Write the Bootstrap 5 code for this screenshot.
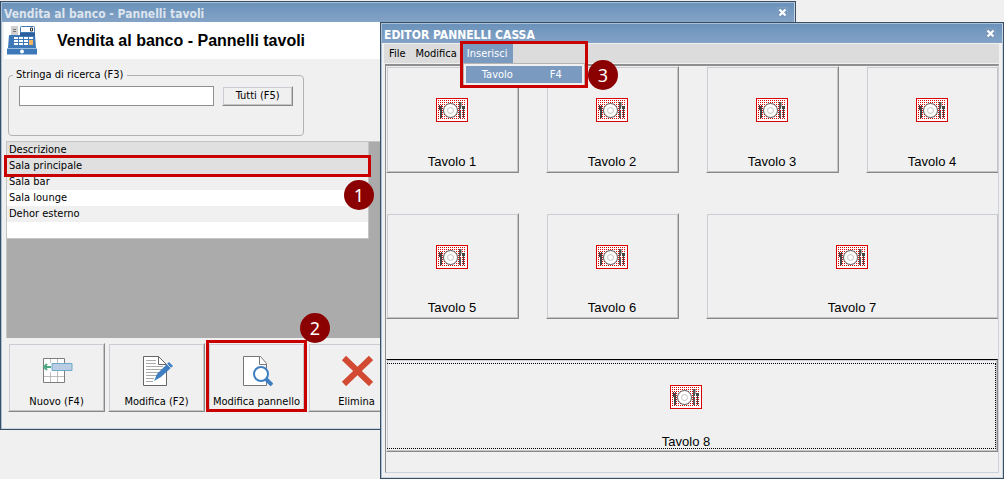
<!DOCTYPE html>
<html lang="it">
<head>
<meta charset="utf-8">
<meta name="viewport" content="width=device-width, initial-scale=1">
<title>Vendita al banco - Pannelli tavoli</title>
<link href="https://cdn.jsdelivr.net/npm/bootstrap@5.3.0/dist/css/bootstrap.min.css" rel="stylesheet">
<style>
  body { background: #f0f0f0; color: #000; font: 11px/16px "DejaVu Sans Condensed", Tahoma, sans-serif; overflow: hidden; }
  .desktop { min-height: 100vh; }
  .win { background: #f0f0f0; border: 1px solid #3a4e63; box-shadow: inset 1px 1px #a9c0d6, inset -1px -1px #c9d6e2; padding: 2px 4px 3px 3px; }
  .win-main { left: 0; top: 1px; width: 796px; height: 429px; }
  .win-editor { left: 380px; right: 0; top: 22px; height: 457px; }
  .win-title { height: 19px; margin: -1px -3px 0 -2px; padding: 3px 6px 0 2px; background: linear-gradient(#6b92bb, #83a3c6); font: bold 12px/16px "DejaVu Sans Condensed", Tahoma, sans-serif; color: #fff; }
  .win-main .win-title { color: #dde5ee; }
  .win-close { width: 11px; height: 11px; margin-bottom: 4px; padding: 0; border: 1px solid #7f9fc2; background: #7596bb; line-height: 0; display: block; }
  .win-head { background: #fff; height: 37px; margin-right: -3px; gap: 19px; }
  .win-head h1 { font: bold 16px/20px "Liberation Sans", Arial, sans-serif; }
  .search-box { width: 296px; height: 69px; border: 1px solid #b2b2b2; border-radius: 4px; margin: 8px 0 0 4px; padding: 3px 10px 0; }
  .search-box legend { float: none; width: auto; font-size: 11px; line-height: 16px; margin: 0 0 0 -6px; padding: 0 4px 0 3px; height: 16px; }
  .search-box input { width: 196px; height: 20px; border: 1px solid #8f8f8f; background: #fff; padding: 0 4px; }
  .raised { background: #f0f0f0; color: #000; border: 1px solid; border-color: transparent #888 #888 transparent; box-shadow: inset 1px 1px #cccdd4, inset -1px -1px #c4c4c4; padding: 0; border-radius: 0; }
  .btn-all { width: 71px; height: 20px; }
  .list-area { background: #ababab; border: solid #c4c4c4; border-width: 1px 0 0 1px; height: 197px; margin: 5px 0 0 2px; }
  .list-area table { width: 362px; border-right: 1px solid #c4c4c4; border-bottom: 1px solid #c4c4c4; }
  .list-area th, .list-area td { height: 16px; line-height: 16px; padding: 0 2px; font-weight: normal; position: relative; }
  .list-area thead, .row-on { background: #e0e0e0; }
  .row-odd { background: #f0f0f0; }
  .row-even { background: #fff; }
  .toolbox { gap: 3px; margin: 5px 0 0 4px; }
  .tool { width: 97px; height: 69px; padding: 8px 0 0; }
  .tool svg { display: block; margin: 0 auto 8px; }
  .frame { border: 3px solid #c80000; pointer-events: none; }
  .frame-row { inset: -3px -3px -3px -3px; }
  .frame-tool { inset: -4px -3px -1px -3px; }
  .frame-menu { inset: -3px; }
  .step { width: 30px; height: 30px; border-radius: 50%; background: #8b0000; color: #fff; font: 18px/30px "Noto Sans", sans-serif; text-align: center; z-index: 5; }
  .step-1 { right: -6px; top: 22px; }
  .step-2 { right: -26px; top: -31px; }
  .step-3 { left: 125px; top: 16px; }
  .menubar { background: #dcdcdc; height: 19px; margin-top: 1px; padding-left: 1px; }
  .menubar a.menu-top { color: #000; text-decoration: none; line-height: 19px; padding: 0 6px 0 4px; display: block; }
  .menubar a.menu-on { background: #7a9abf; color: #fff; }
  .menu-wrap { z-index: 4; }
  .menu-drop { left: 0; top: 19px; width: 122px; min-width: 0; padding: 2px; margin: 0; border: 1px solid #b4b4b4; border-radius: 0; background: #f0f0f0; box-shadow: none; font-size: 11px; display: block; }
  .menu-drop a { background: #7a9abf; color: #fff; line-height: 17px; padding: 0 20px 0 16px; }
  .menu-area { left: 0; top: 0; width: 122px; height: 41px; z-index: 1001; }
  .canvas-area { height: 409px; margin: 1px 0 0 1px; border: solid; border-width: 2px 1px 1px 1px; border-color: #8e8e8e #cdd1d8 #cdd1d8 #8e8e8e; overflow: hidden; }
  .tiles { display: grid; grid-template-columns: repeat(4, 1fr); grid-template-rows: 107px 106px 93px; gap: 40px 27px; margin-right: -1px; }
  .tile { display: flex; flex-direction: column; align-items: center; justify-content: space-between; padding: 31px 1px 2px 0; font: 13px/16px "Liberation Sans", Arial, sans-serif; }
  .tile-wide { grid-column: span 2; }
  .tile-full { grid-column: span 4; position: relative; padding: 25px 12px 1px 0; border-top: 1px solid #000; margin-right: 1px; }
  .tile-full::after { content: ""; position: absolute; inset: 3px 1px 2px 0; border: 1px dotted #000; border-left: 0; }
</style>
</head>
<body>
<svg width="0" height="0" class="position-absolute" aria-hidden="true">
  <defs>
    <symbol id="placemat" viewBox="0 0 32 24">
      <rect width="32" height="24" fill="#dc0000"/><rect x="1" y="1" width="30" height="22" fill="#fff"/>
      <path d="M2 2.500h28M2 4.500h28M2 6.500h28M2 8.500h28M2 10.500h28M2 12.500h28M2 14.500h28M2 16.500h28M2 18.500h28M2 20.500h28" fill="none" stroke="#d80000" stroke-dasharray="1 1"/>
      <circle cx="14.500" cy="12.500" r="7" fill="#fff" stroke="#555"/><circle cx="14.500" cy="12.500" r="3" fill="#fff" stroke="#c4c4c4"/>
      <path d="M3 7h1v3h1V7h1v5H5v8H4v-8H3z" fill="#444"/><path d="M3 9h3v2H3zM4 12h2v8H4z" fill="#444"/>
      <path d="M23 4h2v7h-1v2h1v7h-2z" fill="#555"/><path d="M25 4h1v5h-1z" fill="#aaa"/>
      <path d="M26 8h3v3h-1v9h-1v-9h-1z" fill="#444"/>
    </symbol>
    <symbol id="cross" viewBox="0 0 9 9"><path d="M1.500 1.500l6 6M7.500 1.500l-6 6" stroke="#fff" stroke-width="2.200"/></symbol>
  </defs>
</svg>

<main class="desktop position-relative overflow-hidden">
  <section class="win win-main position-absolute">
    <div class="win-title d-flex justify-content-between align-items-center">
      <span>Vendita al banco - Pannelli tavoli</span>
      <button class="win-close" aria-label="Chiudi"><svg width="9" height="9"><use href="#cross"/></svg></button>
    </div>
    <header class="win-head d-flex align-items-center">
      <svg width="34" height="34" viewBox="0 0 34 34">
        <path d="M5 11h26l1 13H4z" fill="#3d78b8"/>
        <path d="M16 8h15v4H16z" fill="#2c5f9b"/>
        <rect x="16.500" y="2.500" width="14" height="6" rx="1" fill="#fff" stroke="#3d78b8"/><path d="M26.500 4h2v3h-2z" fill="none" stroke="#333"/>
        <path d="M7 2h7v9H7z" fill="#d0d0d0"/><path d="M9 5.500h3M9 7.500h3" stroke="#777"/>
        <path d="M10 13h19v8H10z" fill="#fff"/><path d="M10 15.500h19M10 18.500h19M14.500 13v8M19.500 13v8M24.500 13v8" stroke="#3d78b8"/>
        <path d="M25 16h4v5h-4z" fill="#f4b562"/>
        <path d="M3 24.500h30v6H3z" fill="#3d78b8"/><circle cx="18" cy="27.500" r="2" fill="#fff"/>
      </svg>
      <h1 class="m-0">Vendita al banco - Pannelli tavoli</h1>
    </header>

    <fieldset class="search-box">
      <legend><label for="search">Stringa di ricerca (F3)</label></legend>
      <div class="d-flex gap-2">
        <input id="search" type="text">
        <button class="raised btn-all">Tutti (F5)</button>
      </div>
    </fieldset>

    <div class="list-area">
      <table>
        <thead><tr><th scope="col">Descrizione</th></tr></thead>
        <tbody>
          <tr class="row-on"><td>Sala principale<span class="frame frame-row position-absolute"></span><span class="step step-1 position-absolute">1</span></td></tr>
          <tr class="row-odd"><td>Sala bar</td></tr>
          <tr class="row-even"><td>Sala lounge</td></tr>
          <tr class="row-odd"><td>Dehor esterno</td></tr>
          <tr class="row-even"><td></td></tr>
        </tbody>
      </table>
    </div>

    <div class="toolbox d-flex">
      <button class="raised tool">
        <svg width="32" height="32" viewBox="0 0 32 32"><path d="M2.500 4.500h21v24h-21z" fill="#fff" stroke="#7d7d7d"/><path d="M9.500 5v23M16.500 5v23M3 10.500h20M3 16.500h20M3 22.500h20" stroke="#bcbcbc"/><path d="M3 9h8v9H3z" fill="#fff"/><path d="M11 9.500h20v7H11z" fill="#b9cde5" stroke="#6fabc9"/><path d="M10 13H3M6 10l-3 3 3 3" fill="none" stroke="#4fa883" stroke-width="2"/></svg>
        Nuovo (F4)
      </button>
      <button class="raised tool">
        <svg width="32" height="32" viewBox="0 0 32 32"><path d="M2.500 2.500h15l8 8v21h-23z" fill="#fff" stroke="#666"/><path d="M17.500 2.500v8h8" fill="none" stroke="#666"/><path d="M5 6.500h10M5 9.500h10M5 12.500h17M5 15.500h17M5 18.500h15M5 21.500h12M5 24.500h8M5 27.500h7" stroke="#aaa"/><path d="M13 27l3-7L28 8l4 4-12 11z" fill="#3f7fc1"/><path d="M26 10l4 4" stroke="#fff" stroke-width=".8"/></svg>
        Modifica (F2)
      </button>
      <button class="raised tool position-relative">
        <svg width="32" height="32" viewBox="0 0 32 32"><path d="M2.500 2.500h17l6 7v22h-23z" fill="#fff" stroke="#777"/><path d="M18.500 2.500v8h7" fill="none" stroke="#777"/><circle cx="20" cy="20" r="7" fill="#fff" stroke="#3f7fc1" stroke-width="2"/><path d="M25 25l6 6" stroke="#3f7fc1" stroke-width="4"/></svg>
        Modifica pannello
        <span class="frame frame-tool position-absolute"></span><span class="step step-2 position-absolute">2</span>
      </button>
      <button class="raised tool">
        <svg width="32" height="32" viewBox="0 0 32 32"><path d="M3 4l27 26M30 4L3 30" stroke="#d14a31" stroke-width="6"/></svg>
        Elimina
      </button>
    </div>
  </section>

  <section class="win win-editor position-absolute">
    <div class="win-title d-flex justify-content-between align-items-center">
      <span>EDITOR PANNELLI CASSA</span>
      <button class="win-close" aria-label="Chiudi"><svg width="9" height="9"><use href="#cross"/></svg></button>
    </div>
    <nav class="menubar d-flex">
      <a class="menu-top" href="#">File</a>
      <a class="menu-top" href="#">Modifica</a>
      <div class="menu-wrap position-relative">
        <a class="menu-top menu-on" href="#">Inserisci</a>
        <div class="menu-drop dropdown-menu show">
          <a class="dropdown-item d-flex justify-content-between" href="#"><span>Tavolo</span><span>F4</span></a>
        </div>
        <div class="menu-area position-absolute pe-none"><span class="frame frame-menu position-absolute"></span></div>
        <span class="step step-3 position-absolute">3</span>
      </div>
    </nav>
    <div class="canvas-area">
      <div class="tiles">
        <button class="raised tile"><svg width="32" height="24"><use href="#placemat"/></svg>Tavolo 1</button>
        <button class="raised tile"><svg width="32" height="24"><use href="#placemat"/></svg>Tavolo 2</button>
        <button class="raised tile"><svg width="32" height="24"><use href="#placemat"/></svg>Tavolo 3</button>
        <button class="raised tile"><svg width="32" height="24"><use href="#placemat"/></svg>Tavolo 4</button>
        <button class="raised tile"><svg width="32" height="24"><use href="#placemat"/></svg>Tavolo 5</button>
        <button class="raised tile"><svg width="32" height="24"><use href="#placemat"/></svg>Tavolo 6</button>
        <button class="raised tile tile-wide"><svg width="32" height="24"><use href="#placemat"/></svg>Tavolo 7</button>
        <button class="raised tile tile-full"><svg width="32" height="24"><use href="#placemat"/></svg>Tavolo 8</button>
      </div>
    </div>
  </section>
</main>
<script src="https://cdn.jsdelivr.net/npm/bootstrap@5.3.0/dist/js/bootstrap.bundle.min.js"></script>
</body>
</html>
